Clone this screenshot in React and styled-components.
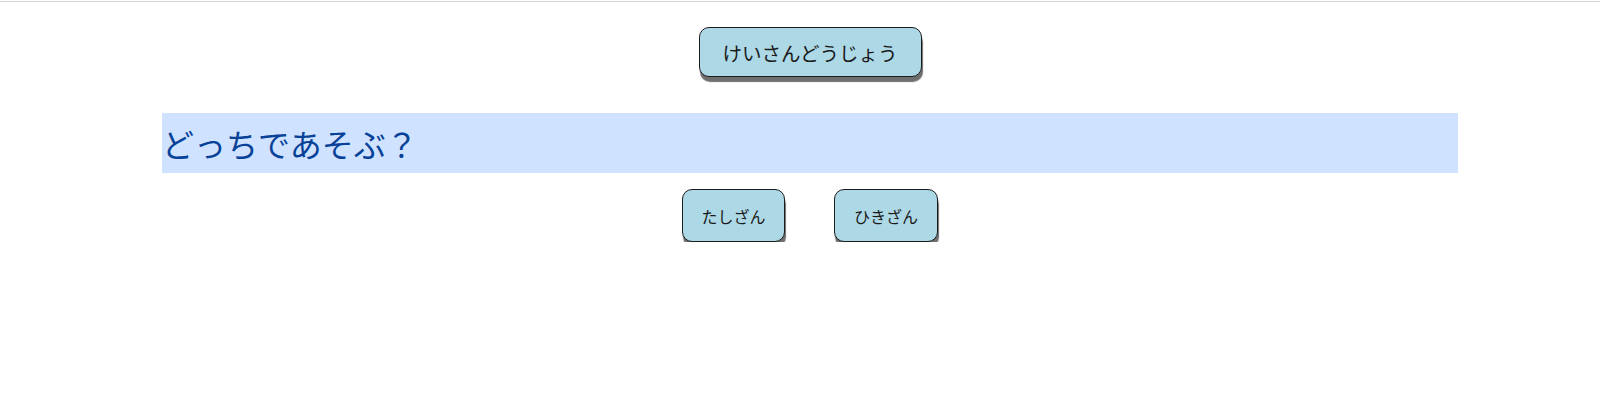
import React from "react";
import styled, { createGlobalStyle } from "styled-components";

const GlobalStyle = createGlobalStyle`
    body {
        margin: 0;
        background: #ffffff;
        font-family: "Noto Sans CJK JP", "Noto Sans", sans-serif;
    }
`;

const TopRule = styled.div`
    height: 1px;
    margin-top: 1px;
    background: #d4d4d4;
`;

const Page = styled.div`
    margin: 0 142px 0 162px;
`;

const Row = styled.div`
    display: flex;
    justify-content: center;
    gap: ${p => p.gap || 0}px;
    margin-top: ${p => p.top || 0}px;
`;

const PlayButton = styled.button`
    box-sizing: border-box;
    width: ${p => p.w}px;
    height: ${p => p.h}px;
    padding: 0;
    background: #add8e6;
    color: #1a1a1a;
    border: 1px solid #1c1c1c;
    border-radius: 10px;
    box-shadow: 1px 5px 1px #6e6e6e;
    font-family: "Noto Sans CJK JP", sans-serif;
    font-size: ${p => p.fs}px;
    cursor: pointer;
`;

const Title = styled.h1`
    display: flex;
    align-items: center;
    height: 60px;
    margin: 36px 0 0;
    background: #cfe2ff;
    color: #084298;
    font-family: "Noto Sans CJK JP", sans-serif;
    font-size: 32px;
    font-weight: 400;
    line-height: 1;
`;

export default function App() {
    return (
        <>
            <GlobalStyle />
            <TopRule />
            <Page>
                <Row top={25}>
                    <PlayButton w={223} h={50} fs={19.5}>
                        けいさんどうじょう
                    </PlayButton>
                </Row>
                <Title>どっちであそぶ？</Title>
                <Row top={16} gap={49}>
                    <PlayButton w={103} h={53} fs={16}>
                        たしざん
                    </PlayButton>
                    <PlayButton w={104} h={53} fs={16}>
                        ひきざん
                    </PlayButton>
                </Row>
            </Page>
        </>
    );
}
